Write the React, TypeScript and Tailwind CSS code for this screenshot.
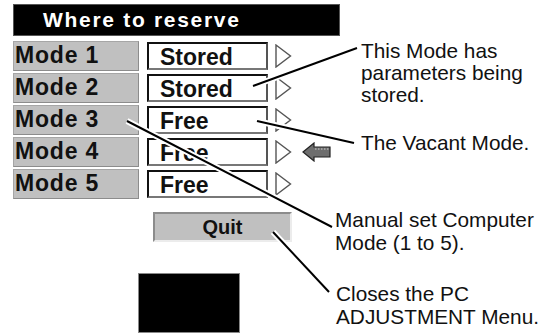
import React from "react";

const modes = [
  { name: "Mode 1", value: "Stored" },
  { name: "Mode 2", value: "Stored" },
  { name: "Mode 3", value: "Free" },
  { name: "Mode 4", value: "Free" },
  { name: "Mode 5", value: "Free" },
];

function Triangle() {
  return (
    <svg width="17" height="24" viewBox="0 0 17 24" className="ml-[7px] shrink-0">
      <polygon points="1,1 15.5,12 1,23" fill="white" stroke="#555" strokeWidth="1.4" />
    </svg>
  );
}

function LeftArrow() {
  return (
    <svg width="29" height="20" viewBox="0 0 29 20" className="ml-[10px] shrink-0">
      <polygon
        points="1,10 12,1 12,5 28,5 28,15 12,15 12,19"
        fill="#6e6e6e"
        stroke="#222"
        strokeWidth="1.2"
      />
      <line x1="13" y1="7" x2="27" y2="7" stroke="#cfcfcf" strokeWidth="1" strokeDasharray="1.5 1.5" />
    </svg>
  );
}

export default function App() {
  return (
    <div className="relative w-[559px] h-[333px] bg-white overflow-hidden flex font-['Liberation_Sans',Arial,sans-serif] text-[#111]">
      {/* menu panel */}
      <div className="ml-[13px] pt-[4px] w-[327px] shrink-0 flex flex-col">
        <div className="h-[32px] bg-black border border-[#555] text-white text-[21px] font-bold tracking-[1.7px] leading-[30px] pl-[29px]">
          Where to reserve
        </div>

        <div className="mt-[5px] flex flex-col gap-[2px]">
          {modes.map((m, i) => (
            <div key={m.name} className="flex items-center h-[30px]">
              <div className="w-[126px] h-full bg-[#c0c0c0] border border-[#a6a6a6] border-r-[#8c8c8c] border-b-[#8c8c8c] text-[23px] font-bold tracking-[0.8px] leading-[26px] pl-[1px]">
                {m.name}
              </div>
              <div className="ml-[8px] w-[121px] h-[28px] bg-white border-2 border-t-[#111] border-l-[#111] border-r-[#555] border-b-[#777] text-[23px] font-bold leading-[27px] pl-[11px]">
                {m.value}
              </div>
              <Triangle />
              {i === 3 && <LeftArrow />}
            </div>
          ))}
        </div>

        <div className="mt-[13px] ml-[140px] w-[139px] h-[31px] bg-[#c0c0c0] border-2 border-t-[#8c8c8c] border-l-[#8c8c8c] border-r-[#ececec] border-b-[#ececec] text-[20px] font-bold leading-[26px] text-center">
          Quit
        </div>

        <div className="mt-[31px] ml-[125px] w-[102px] h-[70px] bg-black border border-[#888]" />
      </div>

      {/* annotations */}
      <div className="pt-[40px] flex flex-col text-[20.8px] leading-[22px] text-[#111]">
        <div className="ml-[21px]">
          This Mode has
          <br />
          parameters being
          <br />
          stored.
        </div>
        <div className="ml-[21px] mt-[26px]">The Vacant Mode.</div>
        <div className="-ml-[5px] mt-[54px] leading-[23px]">
          Manual set Computer
          <br />
          Mode (1 to 5).
        </div>
        <div className="-ml-[4px] mt-[28px] leading-[23px]">
          Closes the PC
          <br />
          ADJUSTMENT Menu.
        </div>
      </div>

      {/* leader lines */}
      <svg
        className="absolute inset-0 pointer-events-none"
        width="559"
        height="333"
        viewBox="0 0 559 333"
      >
        <g stroke="white" strokeWidth="6" strokeLinecap="butt">
          <line x1="253" y1="86" x2="357" y2="48" />
          <line x1="257" y1="121" x2="354" y2="143" />
          <line x1="127" y1="121" x2="332" y2="227" />
          <line x1="273" y1="232" x2="329" y2="292" />
        </g>
        <g stroke="black" strokeWidth="2" strokeLinecap="butt">
          <line x1="253" y1="86" x2="357" y2="48" />
          <line x1="257" y1="121" x2="354" y2="143" />
          <line x1="127" y1="121" x2="332" y2="227" />
          <line x1="273" y1="232" x2="329" y2="292" />
        </g>
      </svg>
    </div>
  );
}
